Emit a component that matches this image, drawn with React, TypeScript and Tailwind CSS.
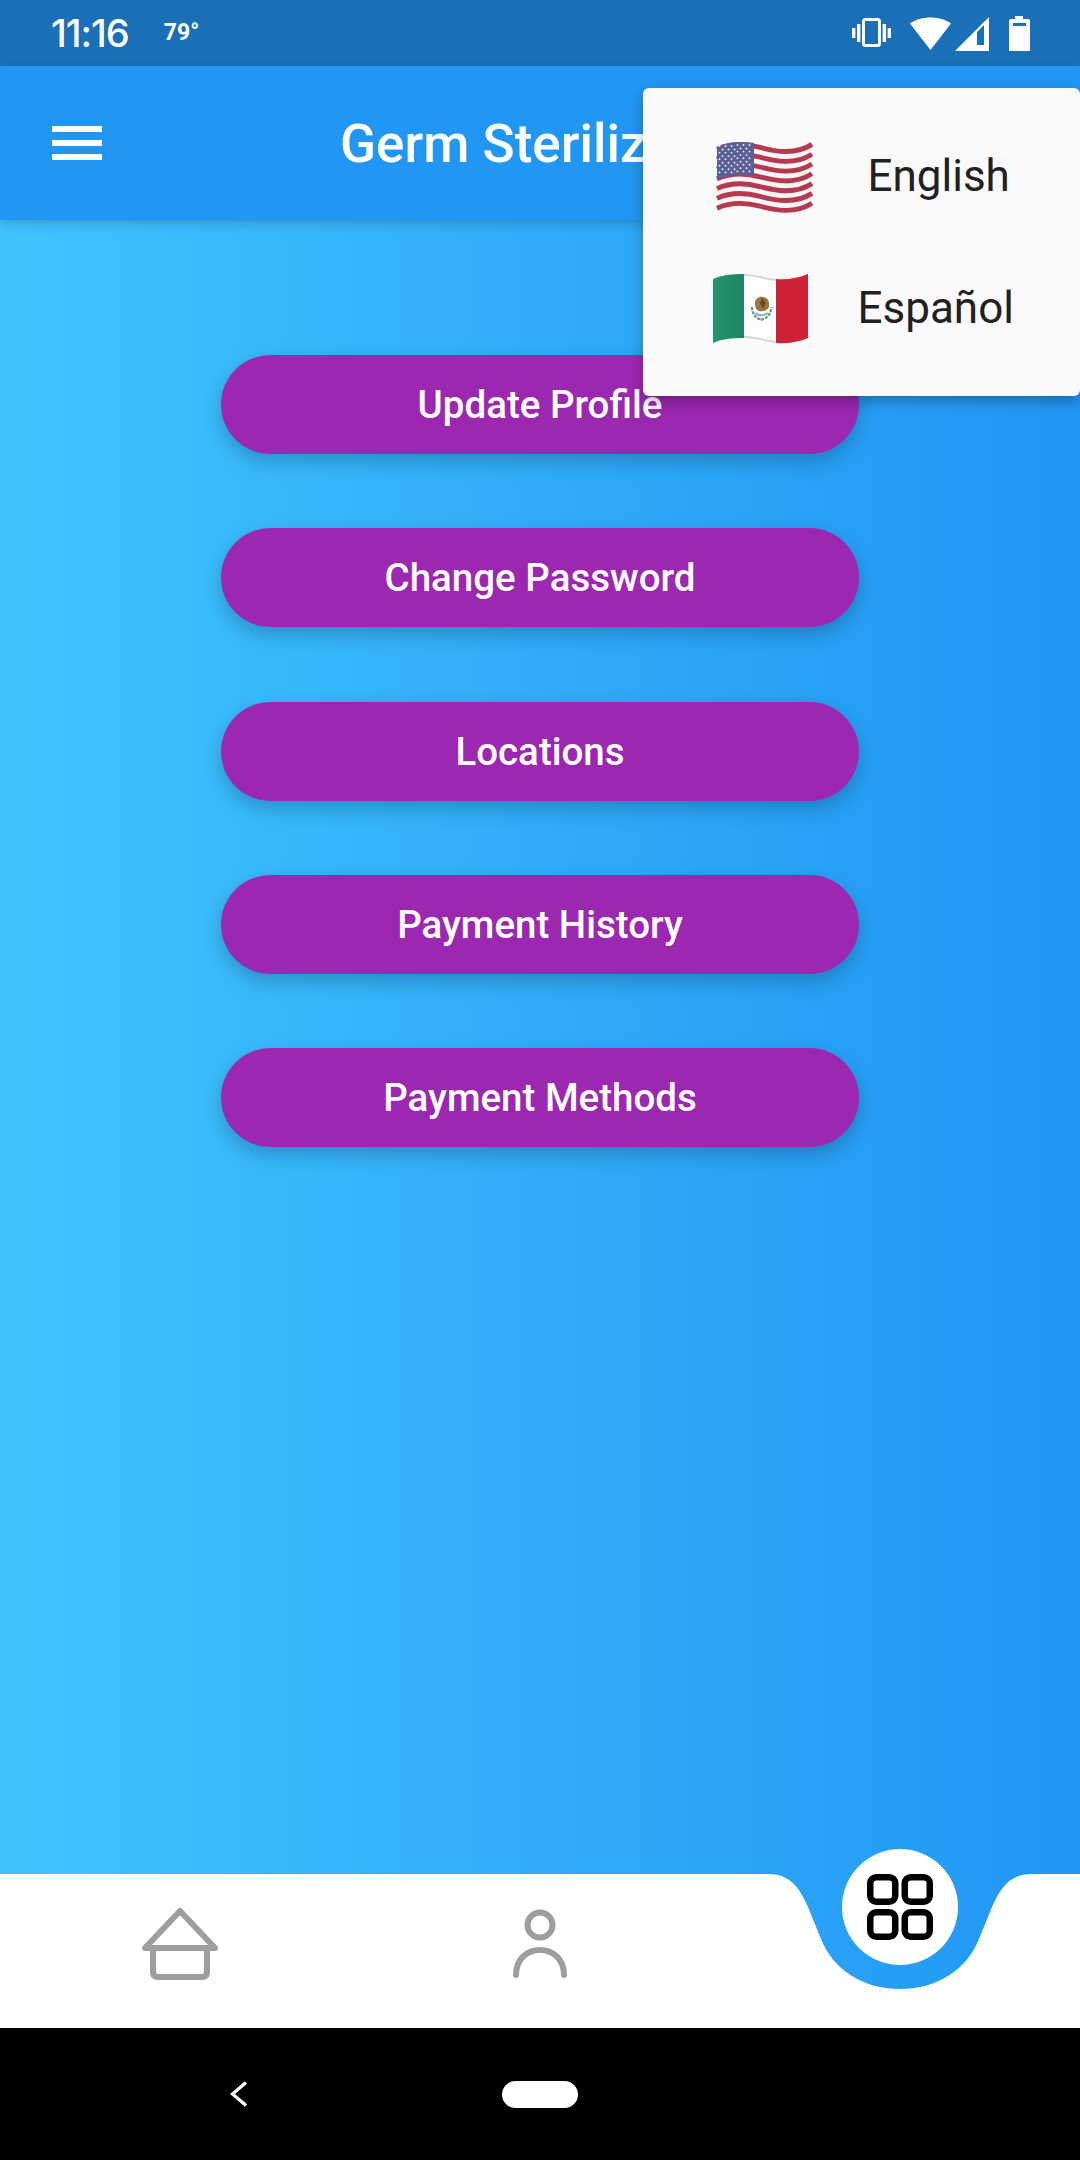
import React from "react";

const buttons = [
  "Update Profile",
  "Change Password",
  "Locations",
  "Payment History",
  "Payment Methods",
];

function UsFlag() {
  const stripes = Array.from({ length: 13 }, (_, i) => i * 4.9);
  const starRows = [0, 1, 2, 3, 4, 5, 6, 7, 8];
  return (
    <svg width="115" height="85" viewBox="0 0 115 85" className="mt-[3px] shrink-0">
      <path d="M12 12 C25 6 40 6 55 10 S90 18 107 7 V68 C90 79 70 73 55 73 S25 70 12 77 Z" fill="#f6f5f5" />
      {stripes.map((dy, i) =>
        i % 2 === 0 ? (
          <path
            key={i}
            d={`M12 ${14.4 + dy} C25 ${8.4 + dy} 40 ${8.4 + dy} 55 ${12.4 + dy} S90 ${20.4 + dy} 107 ${9.4 + dy}`}
            fill="none"
            stroke="#b5394f"
            strokeWidth="4.9"
          />
        ) : null
      )}
      <path d="M12 12 C22 7 36 6 49 8 V41 C36 39 22 39 12 45 Z" fill="#5a5f95" />
      {starRows.map((r) =>
        Array.from({ length: r % 2 === 0 ? 6 : 5 }, (_, c) => (
          <circle
            key={`${r}-${c}`}
            cx={(r % 2 === 0 ? 14.5 : 17.5) + c * 6}
            cy={12 + r * 3.3 - (c < 3 ? 1 : 2) + (r % 2) * 0.2}
            r="0.95"
            fill="#eef0f8"
          />
        ))
      )}
    </svg>
  );
}

function MxFlag() {
  return (
    <svg width="115" height="85" viewBox="0 0 115 85" className="mt-[-2px] shrink-0">
      <defs>
        <linearGradient id="mxGreen" x1="0" y1="0" x2="1" y2="0">
          <stop offset="0" stopColor="#24936f" />
          <stop offset="1" stopColor="#1f8464" />
        </linearGradient>
      </defs>
      <path d="M8 14 C16 10 28 9 39 9 V73 C28 73 16 74 8 78 Z" fill="url(#mxGreen)" />
      <path d="M39 9 C50 9 61 13 71 14 V78 C61 77 50 73 39 73 Z" fill="#fdfdfd" />
      <path d="M39 9 C50 9 61 13 71 14 V16 C61 15 50 11 39 11 Z" fill="#d5d5d6" />
      <path d="M39 71 C50 71 61 75 71 76 V78 C61 77 50 73 39 73 Z" fill="#d5d5d6" />
      <path d="M71 14 C82 15 94 13 103 9 V73 C94 77 82 79 71 78 Z" fill="#ce2236" />
      {/* eagle and wreath */}
      <path d="M50 38 C50 33 55 31 58 32 C62 32 65 36 64 42 C62 46 58 47 54 46 C51 45 50 42 50 38 Z" fill="#9a7440" />
      <path d="M57 33 L61 38 L58 44 L55 38 Z" fill="#6b4a25" />
      <path d="M47 42 C47 50 52 54 56.5 54.5 C61 54 66 50 66.5 42" fill="none" stroke="#5c9c6e" strokeWidth="2.2" strokeDasharray="3 1.2" />
      <path d="M50 48 C53 51 60 51 63 48" fill="none" stroke="#7fb2c4" strokeWidth="2.2" />
      <circle cx="56.5" cy="54.5" r="1.2" fill="#c9923f" />
    </svg>
  );
}

function StatusIcons() {
  return (
    <svg width="178" height="36" viewBox="0 0 178 36" fill="#ffffff">
      {/* vibrate */}
      <rect x="11.5" y="4.5" width="16" height="26" rx="2" fill="none" stroke="#ffffff" strokeWidth="3" />
      <rect x="0" y="13" width="3.4" height="10" />
      <rect x="5" y="9" width="3.4" height="18" />
      <rect x="30.6" y="9" width="3.4" height="18" />
      <rect x="35.6" y="13" width="3.4" height="10" />
      {/* wifi */}
      <path d="M58 8.5 C69 0.5 88 0.5 99 8.5 L78.5 35 Z" />
      {/* signal */}
      <path d="M103 36 L137 2 V36 Z" />
      <path d="M125 30 V17 L132 10 V30 Z" fill="#1a6fb6" />
      {/* battery */}
      <path d="M163 1 H171 V4 H176 Q178 4 178 6 V36 Q178 37 176 37 H158 Q157 37 157 36 V6 Q157 4 159 4 H163 Z" />
      <rect x="161" y="8" width="13" height="3" fill="#1a6fb6" />
    </svg>
  );
}

function HomeIcon() {
  return (
    <svg width="80" height="74" viewBox="0 0 80 74" fill="none" stroke="#9e9e9e" strokeWidth="6" strokeLinejoin="round" strokeLinecap="round">
      <path d="M40 4 L5 41 H75 Z" />
      <path d="M13 41 V65 Q13 70 18 70 H62 Q67 70 67 65 V41" />
    </svg>
  );
}

function PersonIcon() {
  return (
    <svg width="60" height="74" viewBox="0 0 60 74" fill="none" stroke="#9e9e9e" strokeWidth="6" strokeLinecap="round">
      <circle cx="30" cy="18" r="12.5" />
      <path d="M6 68 C6 52 17 43 30 43 C43 43 54 52 54 68" />
    </svg>
  );
}

function GridIcon() {
  return (
    <svg width="66" height="66" viewBox="0 0 66 66" fill="none" stroke="#000000" strokeWidth="6.5">
      <rect x="3.25" y="3.25" width="25" height="24.5" rx="6" />
      <rect x="37.75" y="3.25" width="25" height="24.5" rx="6" />
      <rect x="3.25" y="38.25" width="25" height="24.5" rx="6" />
      <rect x="37.75" y="38.25" width="25" height="24.5" rx="6" />
    </svg>
  );
}

export default function App() {
  return (
    <div className="relative flex h-[2160px] w-[1080px] flex-col overflow-hidden font-[Roboto,sans-serif] text-white">
      <div className="flex h-[66px] items-center justify-between bg-[#1a6fb6] pl-[51px] pr-[50px]">
        <div className="flex items-center">
          <span className="font-[Inter,sans-serif] text-[38px] font-medium tracking-[-1px]">11:16</span>
          <span className="ml-[35px] text-[23px] font-bold">79°</span>
        </div>
        <StatusIcons />
      </div>

      <header className="relative z-10 flex h-[154px] items-center bg-[#2196f3] px-[52px] shadow-[0_4px_10px_rgba(0,0,0,0.18)]">
        <div className="flex w-[50px] flex-col gap-[8px]">
          <div className="h-[6px] bg-white" />
          <div className="h-[6px] bg-white" />
          <div className="h-[6px] bg-white" />
        </div>
        <h1 className="ml-[238px] whitespace-nowrap pt-[4px] text-[53px] font-medium">Germ Sterilization</h1>
      </header>

      <div className="flex flex-1 flex-col bg-gradient-to-r from-[#40c4ff] to-[#2196f3]">
        <main className="flex flex-1 flex-col items-center gap-[74.25px] pt-[135px]">
          {buttons.map((label) => (
            <button
              key={label}
              className="h-[99px] w-[638px] rounded-full bg-[#9c27b0] pt-[1px] text-[38.5px] font-medium text-white shadow-[0_8px_20px_rgba(0,0,0,0.22)]"
            >
              {label}
            </button>
          ))}
        </main>

        <nav className="relative grid h-[154px] grid-cols-3">
          <svg className="absolute inset-0" width="1080" height="154" viewBox="0 0 1080 154">
            <path
              d="M0 0 H768 C790 0 799 13 808 33 L821 65 C833 95 862 115 900 115 C938 115 967 95 979 65 L992 33 C1001 13 1010 0 1032 0 H1080 V154 H0 Z"
              fill="#ffffff"
            />
          </svg>
          <div className="relative flex justify-center pt-[33px]">
            <HomeIcon />
          </div>
          <div className="relative flex justify-center pt-[33px]">
            <PersonIcon />
          </div>
          <div className="relative flex justify-center">
            <div className="absolute top-[-25px] flex h-[116px] w-[116px] items-center justify-center rounded-full bg-white">
              <GridIcon />
            </div>
          </div>
        </nav>
      </div>

      <div className="flex h-[132px] items-center bg-black pl-[230px]">
        <svg width="18" height="26" viewBox="0 0 18 26" fill="none" stroke="#ffffff" strokeWidth="3.4">
          <path d="M16 1.5 L2.5 13 L16 24.5" />
        </svg>
        <div className="ml-[254px] h-[27px] w-[76px] rounded-full bg-white" />
      </div>

      <div className="absolute right-0 top-[88px] z-20 flex h-[308px] w-[437px] flex-col justify-center rounded-[6px] bg-[#fafafa] text-[#212121] shadow-[0_6px_14px_rgba(0,0,0,0.28)]">
        <div className="flex h-[132px] items-center pl-[62px]">
          <UsFlag />
          <span className="ml-[47.5px] text-[44px]">English</span>
        </div>
        <div className="flex h-[132px] items-center pl-[62px]">
          <MxFlag />
          <span className="ml-[37.5px] text-[44px]">Español</span>
        </div>
      </div>
    </div>
  );
}
